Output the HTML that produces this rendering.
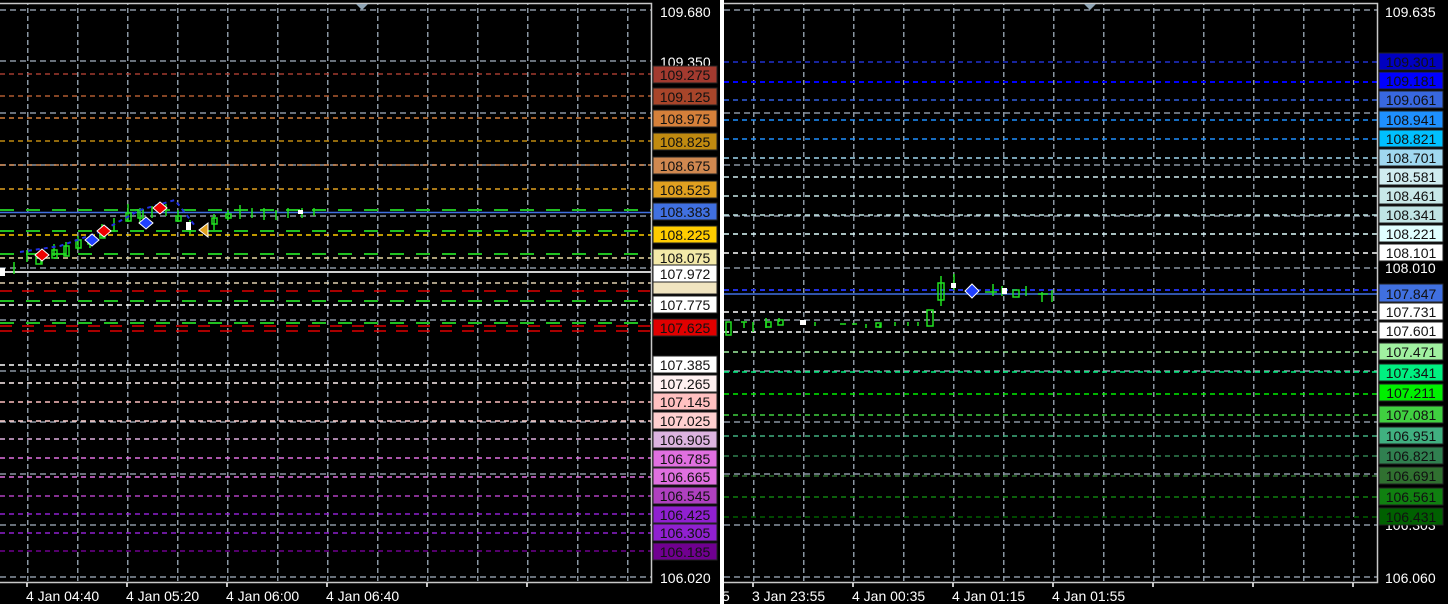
<!DOCTYPE html>
<html><head><meta charset="utf-8"><style>
html,body{margin:0;padding:0;background:#000;width:1448px;height:604px;overflow:hidden}
svg{display:block}
text{font-family:"Liberation Sans",Arial,sans-serif;font-size:14px}
</style></head><body>
<svg width="1448" height="604" viewBox="0 0 1448 604" xmlns="http://www.w3.org/2000/svg">
<defs>
<pattern id="vgL" x="27" y="0" width="50" height="8" patternUnits="userSpaceOnUse">
<rect x="0" y="0" width="1.5" height="5" fill="#8a96a2"/></pattern>
<pattern id="vgR" x="753" y="0" width="50" height="8" patternUnits="userSpaceOnUse">
<rect x="0" y="0" width="1.5" height="5" fill="#8a96a2"/></pattern>
</defs>
<rect width="1448" height="604" fill="#000"/>
<!-- LEFT PANEL -->
<rect x="0" y="4" width="651" height="578" fill="url(#vgL)"/>
<g stroke="#8a96a2" stroke-width="1.5" stroke-dasharray="6 4">
<line x1="0" y1="10" x2="651" y2="10"/><line x1="0" y1="61" x2="651" y2="61"/>
<line x1="0" y1="113" x2="651" y2="113"/><line x1="0" y1="165" x2="651" y2="165"/>
<line x1="0" y1="216" x2="651" y2="216"/><line x1="0" y1="268" x2="651" y2="268"/>
<line x1="0" y1="320" x2="651" y2="320"/><line x1="0" y1="371" x2="651" y2="371"/>
<line x1="0" y1="422" x2="651" y2="422"/><line x1="0" y1="474" x2="651" y2="474"/>
<line x1="0" y1="525" x2="651" y2="525"/><line x1="0" y1="577" x2="651" y2="577"/>
</g>
<g stroke-width="1.5" stroke-dasharray="5 4">
<line x1="0" y1="74" x2="651" y2="74" stroke="#a33a2f"/>
<line x1="0" y1="96" x2="651" y2="96" stroke="#b05a30"/>
<line x1="0" y1="118" x2="651" y2="118" stroke="#d5803a"/>
<line x1="0" y1="141" x2="651" y2="141" stroke="#c08a10"/>
<line x1="0" y1="165" x2="651" y2="165" stroke="#d08850"/>
<line x1="0" y1="189" x2="651" y2="189" stroke="#e0a020"/>
<line x1="0" y1="235" x2="651" y2="235" stroke="#ffcc00"/>
<line x1="0" y1="258" x2="651" y2="258" stroke="#e8d8a0"/>
<line x1="0" y1="283" x2="651" y2="283" stroke="#e0d0b0"/>
<line x1="0" y1="291" x2="651" y2="291" stroke="#e00000" stroke-dasharray="12 10"/>
<line x1="0" y1="305" x2="651" y2="305" stroke="#ffffff"/>
<line x1="0" y1="331" x2="651" y2="331" stroke="#e00000" stroke-dasharray="12 10"/>
<line x1="0" y1="326" x2="651" y2="326" stroke="#e00000" stroke-dasharray="12 10"/>
<line x1="0" y1="365" x2="651" y2="365" stroke="#ffffff"/>
<line x1="0" y1="383" x2="651" y2="383" stroke="#fff0f0"/>
<line x1="0" y1="402" x2="651" y2="402" stroke="#ffc0c0"/>
<line x1="0" y1="421" x2="651" y2="421" stroke="#ffd0d0"/>
<line x1="0" y1="439" x2="651" y2="439" stroke="#e0b0e0"/>
<line x1="0" y1="458" x2="651" y2="458" stroke="#e070e0"/>
<line x1="0" y1="477" x2="651" y2="477" stroke="#e070e0"/>
<line x1="0" y1="496" x2="651" y2="496" stroke="#b040c0"/>
<line x1="0" y1="514" x2="651" y2="514" stroke="#9020d0"/>
<line x1="0" y1="533" x2="651" y2="533" stroke="#9020d0"/>
<line x1="0" y1="551" x2="651" y2="551" stroke="#700090"/>
</g>
<g stroke="#20c020" stroke-width="2" stroke-dasharray="14 12">
<line x1="0" y1="210" x2="651" y2="210"/><line x1="0" y1="231" x2="651" y2="231"/>
<line x1="0" y1="254" x2="651" y2="254"/><line x1="0" y1="301" x2="651" y2="301"/>
<line x1="0" y1="323" x2="651" y2="323"/>
</g>
<line x1="0" y1="212.5" x2="651" y2="212.5" stroke="#4070e0" stroke-width="1.5"/>
<line x1="0" y1="272" x2="651" y2="272" stroke="#d0d0d0" stroke-width="2"/>
<g stroke="#20e020" stroke-width="1.5" fill="none">
<path d="M1 268v8 M14 262v12 M27 250v12 M41 250v14 M54 244v12 M66 242v14 M78 236v14 M90 238v10 M102 224v14 M114 218v14 M128 204v18 M140 208v16 M152 206v12 M166 204v12 M178 210v12 M190 220v14 M214 214v16 M228 210v10 M240 205v14 M252 208v10 M264 208v12 M276 210v10 M288 208v10 M302 208v10 M314 208v8"/>
<rect x="36" y="256" width="6" height="8"/><rect x="52" y="250" width="5" height="8"/><rect x="64" y="246" width="5" height="10"/>
<rect x="76" y="240" width="5" height="8"/><rect x="88" y="238" width="5" height="6"/><rect x="100" y="230" width="5" height="8"/>
<rect x="126" y="213" width="5" height="8"/><rect x="138" y="210" width="5" height="8"/><rect x="176" y="216" width="5" height="5"/>
<rect x="212" y="218" width="5" height="6"/><rect x="226" y="214" width="5" height="4"/>
</g>
<rect x="0" y="268" width="5" height="8" fill="#fff"/><rect x="186" y="222" width="5" height="8" fill="#fff"/><rect x="298" y="210" width="5" height="4" fill="#fff"/>
<path d="M20 252 L60 246 L100 232 L140 210 L175 200 L195 226" stroke="#2030e0" stroke-width="2" stroke-dasharray="4 4" fill="none"/>
<g stroke="#fff" stroke-width="1">
<path d="M42 249 l7 6 l-7 6 l-7 -6z" fill="#e00"/><path d="M104 225 l7 6 l-7 6 l-7 -6z" fill="#e00"/>
<path d="M160 202 l7 6 l-7 6 l-7 -6z" fill="#e00"/><path d="M92 234 l7 6 l-7 6 l-7 -6z" fill="#2040ff"/>
<path d="M146 217 l7 6 l-7 6 l-7 -6z" fill="#2040ff"/>
</g>
<path d="M208 223 l-9 7 l9 7z" fill="#e0a020" stroke="#fff"/>
<path d="M0 3.5 H651.5 V582.5 H0" stroke="#c8c8c8" stroke-width="1.5" fill="none"/>
<path d="M356 4 h12 l-6 6z" fill="#8fa4b4"/>
<g fill="#fff">
<text x="660" y="17">109.680</text>
<text x="660" y="67">109.350</text>
<text x="660" y="583">106.020</text>
<text x="26" y="601">4 Jan 04:40</text><text x="126" y="601">4 Jan 05:20</text>
<text x="226" y="601">4 Jan 06:00</text><text x="326" y="601">4 Jan 06:40</text>
</g>
<g stroke="#fff" stroke-width="1.5"><path d="M27 583v4 M127 583v4 M227 583v4 M327 583v4 M427 583v4 M527 583v4"/></g>
<g stroke="#222" stroke-width="1">
<rect x="653" y="66" width="64" height="17" fill="#a33a2f"/>
<rect x="653" y="88" width="64" height="17" fill="#a8452a"/>
<rect x="653" y="110" width="64" height="17" fill="#d5803a"/>
<rect x="653" y="133" width="64" height="17" fill="#c08a10"/>
<rect x="653" y="157" width="64" height="17" fill="#d08850"/>
<rect x="653" y="181" width="64" height="17" fill="#e0a020"/>
<rect x="653" y="203" width="64" height="17" fill="#4070e0"/>
<rect x="653" y="226" width="64" height="17" fill="#ffcc00"/>
<rect x="653" y="249" width="64" height="17" fill="#f3e9a8"/>
<rect x="653" y="280" width="64" height="14" fill="#f0e4c0"/>
<rect x="653" y="265" width="64" height="17" fill="#fff"/>
<rect x="653" y="296" width="64" height="17" fill="#fff"/>
<rect x="653" y="319" width="64" height="17" fill="#e00000"/>
<rect x="653" y="356" width="64" height="17" fill="#fff"/>
<rect x="653" y="375" width="64" height="17" fill="#fff0f0"/>
<rect x="653" y="393" width="64" height="17" fill="#ffc0c0"/>
<rect x="653" y="412" width="64" height="17" fill="#ffd0d0"/>
<rect x="653" y="431" width="64" height="17" fill="#dcb4e0"/>
<rect x="653" y="450" width="64" height="17" fill="#e070e0"/>
<rect x="653" y="468" width="64" height="17" fill="#e070e0"/>
<rect x="653" y="487" width="64" height="17" fill="#b040c0"/>
<rect x="653" y="506" width="64" height="17" fill="#9020d0"/>
<rect x="653" y="524" width="64" height="17" fill="#9020d0"/>
<rect x="653" y="543" width="64" height="17" fill="#700090"/>
</g>
<g fill="#111" text-anchor="middle">
<text x="685" y="80">109.275</text><text x="685" y="102">109.125</text><text x="685" y="124">108.975</text>
<text x="685" y="147">108.825</text><text x="685" y="171">108.675</text><text x="685" y="195">108.525</text>
<text x="685" y="217">108.383</text><text x="685" y="240">108.225</text><text x="685" y="263">108.075</text>
<text x="685" y="279">107.972</text><text x="685" y="310">107.775</text><text x="685" y="333">107.625</text>
<text x="685" y="370">107.385</text><text x="685" y="389">107.265</text><text x="685" y="407">107.145</text>
<text x="685" y="426">107.025</text><text x="685" y="445">106.905</text><text x="685" y="464">106.785</text>
<text x="685" y="482">106.665</text><text x="685" y="501">106.545</text><text x="685" y="520">106.425</text>
<text x="685" y="538">106.305</text><text x="685" y="557">106.185</text>
</g>
<rect x="720" y="0" width="4" height="604" fill="#fff"/>
<!-- RIGHT PANEL -->
<rect x="724" y="4" width="653" height="578" fill="url(#vgR)"/>
<g stroke="#8a96a2" stroke-width="1.5" stroke-dasharray="6 4">
<line x1="724" y1="10" x2="1377" y2="10"/><line x1="724" y1="113" x2="1377" y2="113"/>
<line x1="724" y1="165" x2="1377" y2="165"/><line x1="724" y1="216" x2="1377" y2="216"/>
<line x1="724" y1="268" x2="1377" y2="268"/><line x1="724" y1="320" x2="1377" y2="320"/>
<line x1="724" y1="371" x2="1377" y2="371"/><line x1="724" y1="422" x2="1377" y2="422"/>
<line x1="724" y1="474" x2="1377" y2="474"/><line x1="724" y1="525" x2="1377" y2="525"/>
<line x1="724" y1="577" x2="1377" y2="577"/>
</g>
<g stroke-width="1.5" stroke-dasharray="5 4">
<line x1="724" y1="62" x2="1377" y2="62" stroke="#2030d0"/>
<line x1="724" y1="82" x2="1377" y2="82" stroke="#0000ff" stroke-width="2"/>
<line x1="724" y1="100" x2="1377" y2="100" stroke="#3060e0"/>
<line x1="724" y1="120" x2="1377" y2="120" stroke="#1e90ff"/>
<line x1="724" y1="139" x2="1377" y2="139" stroke="#1e90ff"/>
<line x1="724" y1="158" x2="1377" y2="158" stroke="#a0d8f0"/>
<line x1="724" y1="177" x2="1377" y2="177" stroke="#d0ecf0"/>
<line x1="724" y1="196" x2="1377" y2="196" stroke="#c8e8e8"/>
<line x1="724" y1="215" x2="1377" y2="215" stroke="#c0e4e4"/>
<line x1="724" y1="234" x2="1377" y2="234" stroke="#e0ffff"/>
<line x1="724" y1="253" x2="1377" y2="253" stroke="#fff"/>
<line x1="724" y1="290" x2="1377" y2="290" stroke="#2030e0" stroke-width="2"/>
<line x1="724" y1="312" x2="1377" y2="312" stroke="#fff"/>
<line x1="724" y1="332" x2="1377" y2="332" stroke="#fff"/>
<line x1="724" y1="352" x2="1377" y2="352" stroke="#a0f0a0"/>
<line x1="724" y1="372" x2="1377" y2="372" stroke="#00f080"/>
<line x1="724" y1="394" x2="1377" y2="394" stroke="#00f000"/>
<line x1="724" y1="415" x2="1377" y2="415" stroke="#40d040"/>
<line x1="724" y1="436" x2="1377" y2="436" stroke="#40b080"/>
<line x1="724" y1="456" x2="1377" y2="456" stroke="#308050"/>
<line x1="724" y1="476" x2="1377" y2="476" stroke="#307030"/>
<line x1="724" y1="497" x2="1377" y2="497" stroke="#108010"/>
<line x1="724" y1="517" x2="1377" y2="517" stroke="#006000"/>
</g>
<line x1="724" y1="294" x2="1377" y2="294" stroke="#4070e0" stroke-width="1.5"/>
<g stroke="#20e020" stroke-width="1.5" fill="none">
<rect x="726" y="322" width="5" height="13"/><path d="M741 322h6M744 322v6 M753 322v10 M766 318v10 M779 318v4 M815 322v4 M840 324h6 M852 324h5 M866 324v4 M880 324v4 M895 322v4 M908 322v4 M918 322v4 M941 276v30 M954 274v16 M993 284v12 M1002 286v10 M1026 286v10 M1042 292v10 M1052 290v12"/>
<rect x="766" y="322" width="5" height="5"/><rect x="778" y="320" width="5" height="5"/><rect x="876" y="323" width="5" height="4"/>
<rect x="927" y="310" width="6" height="16"/><rect x="938" y="283" width="6" height="17"/><rect x="1013" y="290" width="6" height="7"/>
<path d="M985 292h12 M1038 294h10"/>
</g>
<rect x="800" y="320" width="6" height="5" fill="#fff"/><rect x="951" y="283" width="5" height="5" fill="#fff"/><rect x="1002" y="288" width="5" height="6" fill="#fff"/>
<path d="M972 284 l7 7 l-7 7 l-7 -7z" fill="#2040ff" stroke="#fff"/>
<path d="M724 3.5 H1377.5 V582.5 H724" stroke="#c8c8c8" stroke-width="1.5" fill="none"/>
<path d="M1084 4 h12 l-6 6z" fill="#8fa4b4"/>
<g fill="#fff">
<text x="1385" y="17">109.635</text>
<text x="1385" y="273">108.010</text>
<text x="1385" y="530">106.303</text>
<text x="1385" y="583">106.060</text>
<text x="752" y="601">3 Jan 23:55</text><text x="852" y="601">4 Jan 00:35</text>
<text x="952" y="601">4 Jan 01:15</text><text x="1052" y="601">4 Jan 01:55</text>
<text x="722" y="601">5</text>
</g>
<g stroke="#fff" stroke-width="1.5"><path d="M753 583v4 M853 583v4 M953 583v4 M1053 583v4 M1153 583v4 M1253 583v4 M1353 583v4"/></g>
<g stroke="#222" stroke-width="1">
<rect x="1379" y="53" width="64" height="17" fill="#0000c0"/>
<rect x="1379" y="72" width="64" height="17" fill="#0000ff"/>
<rect x="1379" y="91" width="64" height="17" fill="#3868e0"/>
<rect x="1379" y="111" width="64" height="17" fill="#1e90ff"/>
<rect x="1379" y="130" width="64" height="17" fill="#00c0ff"/>
<rect x="1379" y="149" width="64" height="17" fill="#a0d8f0"/>
<rect x="1379" y="168" width="64" height="17" fill="#d0ecf0"/>
<rect x="1379" y="187" width="64" height="17" fill="#c8e8e8"/>
<rect x="1379" y="206" width="64" height="17" fill="#c0e4e4"/>
<rect x="1379" y="225" width="64" height="17" fill="#e0ffff"/>
<rect x="1379" y="244" width="64" height="17" fill="#fff"/>
<rect x="1379" y="284" width="64" height="18" fill="#4070e0"/>
<rect x="1379" y="303" width="64" height="17" fill="#fff"/>
<rect x="1379" y="322" width="64" height="17" fill="#fff"/>
<rect x="1379" y="343" width="64" height="17" fill="#a0f0a0"/>
<rect x="1379" y="364" width="64" height="17" fill="#00f080"/>
<rect x="1379" y="384" width="64" height="17" fill="#00f000"/>
<rect x="1379" y="406" width="64" height="17" fill="#40d040"/>
<rect x="1379" y="427" width="64" height="17" fill="#40b080"/>
<rect x="1379" y="447" width="64" height="17" fill="#308050"/>
<rect x="1379" y="467" width="64" height="17" fill="#307030"/>
<rect x="1379" y="488" width="64" height="17" fill="#108010"/>
<rect x="1379" y="508" width="64" height="17" fill="#006000"/>
</g>
<g fill="#111" text-anchor="middle">
<text x="1411" y="67">109.301</text><text x="1411" y="86">109.181</text><text x="1411" y="105">109.061</text>
<text x="1411" y="125">108.941</text><text x="1411" y="144">108.821</text><text x="1411" y="163">108.701</text>
<text x="1411" y="182">108.581</text><text x="1411" y="201">108.461</text><text x="1411" y="220">108.341</text>
<text x="1411" y="239">108.221</text><text x="1411" y="258">108.101</text><text x="1411" y="299">107.847</text>
<text x="1411" y="317">107.731</text><text x="1411" y="336">107.601</text><text x="1411" y="357">107.471</text>
<text x="1411" y="378">107.341</text><text x="1411" y="398">107.211</text><text x="1411" y="420">107.081</text>
<text x="1411" y="441">106.951</text><text x="1411" y="461">106.821</text><text x="1411" y="481">106.691</text>
<text x="1411" y="502">106.561</text><text x="1411" y="522">106.431</text>
</g>
</svg>
</body></html>
